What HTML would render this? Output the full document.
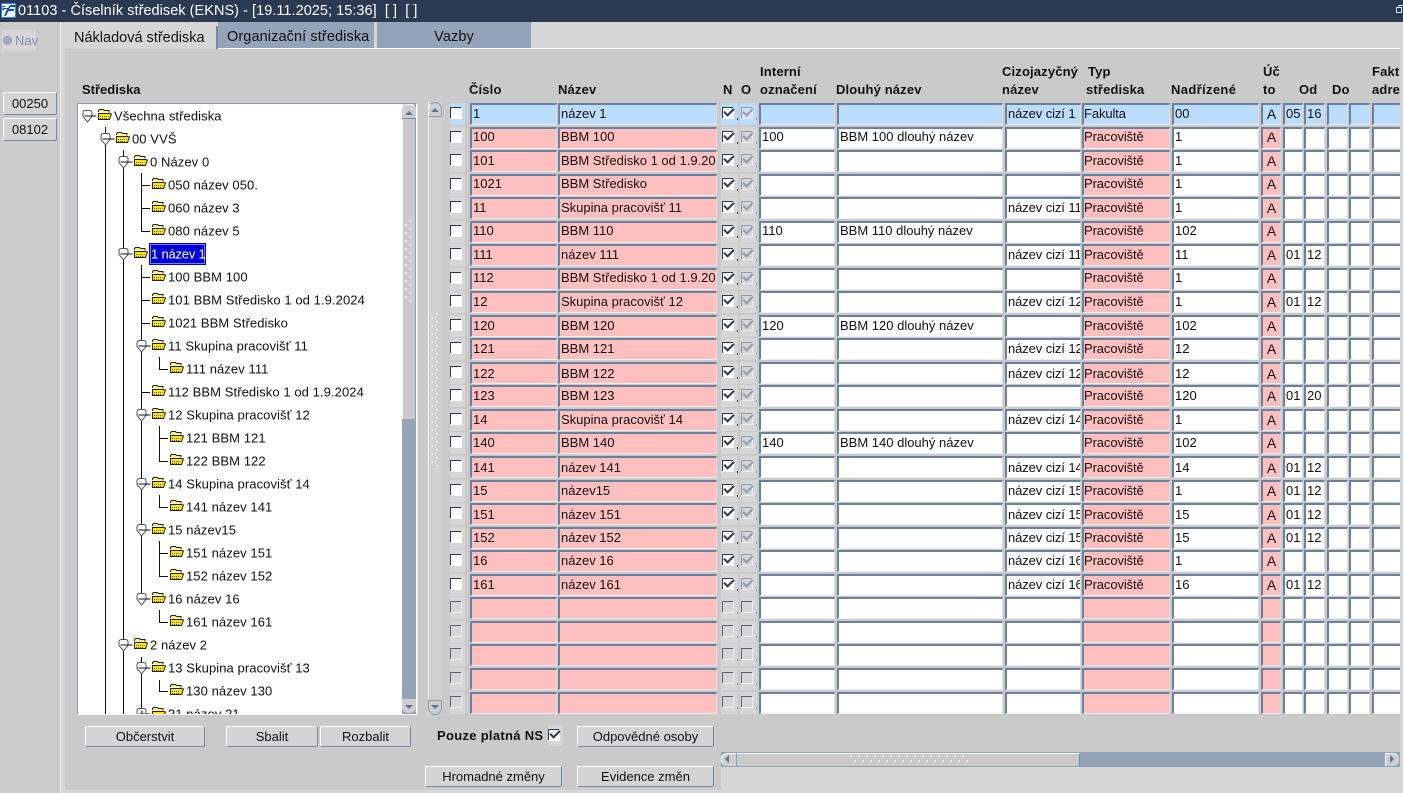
<!DOCTYPE html>
<html><head><meta charset="utf-8"><title>01103</title>
<style>
html,body{margin:0;padding:0;width:1403px;height:793px;overflow:hidden;background:#d6d6d6}
body{font-family:"Liberation Sans",Arial,sans-serif;font-size:13px;color:#111;position:relative}
.a{position:absolute}
#tb{left:0;top:0;width:1403px;height:22px;background:#2b3a52;color:#fff;font-size:14.5px;line-height:21px;white-space:pre;letter-spacing:.04px}
#side{left:0;top:22px;width:60px;height:771px;background:#cbcbcb;border-right:1px solid #eee}
#panel{left:65px;top:49px;width:1335px;height:741px;background:#cacaca}
#lo{left:721px;top:767px;width:682px;height:26px;background:#d6d6d6}
#wl{left:218px;top:48px;width:1182px;height:1px;background:#fff}
.tab{top:22px;height:26px;background:#94a3b7;line-height:31px;font-size:14.5px;letter-spacing:.1px;color:#111}
.h{position:absolute;font-weight:bold;font-size:13px;letter-spacing:.15px;white-space:nowrap;line-height:16px;color:#111}
.btn{position:absolute;box-sizing:border-box;background:#d4d4d4;border:1px solid;border-color:#fff #7489a8 #7489a8 #fff;border-radius:2px;text-align:center;font-size:13px;line-height:19px;white-space:nowrap;color:#111}
.r{position:absolute;left:0;top:0;width:1400px;height:22px}
.r i{position:absolute;top:0;height:22px;box-sizing:border-box;font-style:normal;background:#fff;border-style:solid;border-width:2px 1px 1px 2px;border-color:#6b7f9f #dcdcdc #efefef #6b7f9f;overflow:hidden;white-space:nowrap;font-size:13px;letter-spacing:0;line-height:18px;padding-left:1px}
.r.t i{line-height:16px}
.r.d i{line-height:20px}
.r i:nth-child(1){left:450px;width:15px;background:#d6d6d6;border:0;padding:0}
.r i:nth-child(2){left:470px;width:87px;background:#ffbfbf}
.r i:nth-child(3){left:558px;width:159px;background:#ffbfbf}
.r i:nth-child(4){left:721px;width:17px;background:#d6d6d6;border:0;padding:0}
.r i:nth-child(5){left:740px;width:17px;background:#d6d6d6;border:0;padding:0}
.r i:nth-child(6){left:759px;width:76px}
.r i:nth-child(7){left:837px;width:166px}
.r i:nth-child(8){left:1005px;width:76px;letter-spacing:-.1px}
.r i:nth-child(9){left:1082px;width:88px;background:#ffbfbf;padding-left:0;letter-spacing:-.1px}
.r i:nth-child(10){left:1172px;width:87px}
.r i:nth-child(11){left:1261px;width:20px;background:#ffbfbf;text-align:center;padding:0;font-size:14px}
.r i:nth-child(12){left:1283px;width:20px}
.r i:nth-child(13){left:1304px;width:21px}
.r i:nth-child(14){left:1327px;width:21px}
.r i:nth-child(15){left:1349px;width:21px}
.r i:nth-child(16){left:1372px;width:28px;border-right:0}
.r.s i{background:#bbdcfd}
.r i:nth-child(4)::after,.r i:nth-child(5)::after{content:"";position:absolute;left:16px;top:15px;width:2px;height:2px;background:#2b3a52}
.r i:nth-child(5)::after{background:#8c9bb0}
.r.e i:nth-child(4)::after,.r.e i:nth-child(5)::after{background:#8c9bb0}
u{position:absolute;left:1px;top:4px;width:10px;height:10px;background:#fff;border-top:1px solid #2b3a52;border-left:1px solid #2b3a52;box-shadow:1px 1px 0 #fff;text-decoration:none;display:block}
.r i:nth-child(1) u{left:0;top:4px}
.r i:nth-child(5) u{background:#d6d6d6;border-color:#8c9bb0;box-shadow:1px 1px 0 #eee}
.r.s i:nth-child(5) u{background:#d8e2ee}
.r.e u,.r.e i:nth-child(5) u{background:#d6d6d6;border-color:#55627a;box-shadow:1px 1px 0 #f2f2f2}
u.k::after{content:"";position:absolute;left:3px;top:-2px;width:4px;height:8px;border:solid #2b3a52;border-width:0 2px 2px 0;transform:rotate(45deg)}
.r i:nth-child(5) u.k::after{border-color:#8c9bb0}
.g{position:absolute;background-image:radial-gradient(circle at 1px 1px,#f2f2f2 .9px,transparent 1.2px),radial-gradient(circle at 1px 1px,#f2f2f2 .9px,transparent 1.2px);background-size:10px 8px;background-position:0 4px,5px 0}
svg text{font-family:"Liberation Sans",Arial,sans-serif;font-size:13px;letter-spacing:.08px;fill:#111}
</style></head><body>
<div id="side" class="a"></div>
<div id="panel" class="a"></div>
<div id="lo" class="a"></div>
<div id="tb" class="a"><span class="a" style="left:18px;top:1px">01103 - Číselník středisek (EKNS) - [19.11.2025; 15:36]  [ ]  [ ]</span></div>
<svg class="a" style="left:1px;top:3px" width="15" height="15" viewBox="0 0 15 15"><rect width="15" height="15" fill="#fff"/><rect x=".5" y=".5" width="14" height="14" fill="none" stroke="#2f7df0"/><path d="M9 2h5v2H9.500L8 6h5v2H7.500L5 13H3l3-7H2V5h5z" fill="#0a4fd0"/><path d="M1 3h3v1H1zM1 6h2v1H1z" fill="#0a4fd0"/></svg>
<svg class="a" style="left:1396px;top:5px" width="7" height="9" viewBox="0 0 7 9"><path d="M2.500.5h4.500M2.500.5v2M.5 2.500h5v5h-5z" fill="none" stroke="#dfe5ee"/></svg>

<div class="a" style="left:2px;top:30px;width:34px;height:21px;background:#d6d6d6"></div>
<div class="a" style="left:3px;top:36px;width:7px;height:7px;border-radius:50%;background:#aab;border:1px solid #8c9bb5"></div>
<div class="a" style="left:15px;top:33px;color:#8391ad;font-size:13px;line-height:16px">Nav</div>
<div class="btn" style="left:3px;top:92px;width:54px;height:23px;line-height:21px">00250</div>
<div class="btn" style="left:3px;top:118px;width:54px;height:23px;line-height:21px">08102</div>

<div class="a" style="left:61px;top:22px;width:4px;height:771px;background:#d6d6d6"></div>
<div class="a" style="left:74px;top:30px;font-size:14.5px;line-height:17px">Nákladová střediska</div>
<div class="a" style="left:216px;top:26px;width:2px;height:23px;background:#7489a8"></div>
<div class="a tab" style="left:218px;width:156px;padding-left:9px;box-sizing:border-box">Organizační střediska</div>
<div class="a" style="left:374px;top:22px;width:3px;height:26px;background:#d6d6d6"></div>
<div class="a tab" style="left:377px;width:154px;text-align:center">Vazby</div>
<div id="wl" class="a"></div>

<div class="h" style="left:82px;top:82px;letter-spacing:0">Střediska</div>
<div class="h" style="left:469px;top:82px">Číslo</div>
<div class="h" style="left:558px;top:82px">Název</div>
<div class="h" style="left:723px;top:82px">N</div>
<div class="h" style="left:741px;top:82px">O</div>
<div class="h" style="left:760px;top:64px">Interní</div>
<div class="h" style="left:760px;top:82px">označení</div>
<div class="h" style="left:836px;top:82px">Dlouhý název</div>
<div class="h" style="left:1002px;top:64px">Cizojazyčný</div>
<div class="h" style="left:1002px;top:82px">název</div>
<div class="h" style="left:1088px;top:64px">Typ</div>
<div class="h" style="left:1086px;top:82px">střediska</div>
<div class="h" style="left:1171px;top:82px;letter-spacing:.35px">Nadřízené</div>
<div class="h" style="left:1263px;top:64px">Úč</div>
<div class="h" style="left:1263px;top:82px">to</div>
<div class="h" style="left:1299px;top:82px">Od</div>
<div class="h" style="left:1332px;top:82px">Do</div>
<div class="a" style="left:1372px;top:60px;width:28px;height:40px;overflow:hidden"><div class="h" style="left:0;top:4px">Faktura</div><div class="h" style="left:0;top:22px">adresa</div></div>

<!-- tree -->
<div class="a" style="left:77px;top:103px;width:338px;height:610px;background:#fff;border:1px solid;border-color:#8a9ab0 #fff #fff #8a9ab0"></div>
<svg class="a" style="left:78px;top:104px" width="324" height="610" viewBox="78 104 324 610">
<defs>
<g id="f"><path d="M.5 3V1.500l1-1h4l1 1h4.500v2" fill="#fff27a" stroke="#222"/><path d="M.5 10.500V4.500h11l2 .5-2 5.500z" fill="#ffe800" stroke="#222"/><path d="M2 7.500h8.500M2 9.500h8" stroke="#5f5600" stroke-dasharray="1 1"/></g>
<g id="m"><path d="M-4.500-2.500Q-4.500-5-2-5h4Q4.500-5 4.500-2.500v3.500L0 6.500-4.500 1z" fill="#fff" stroke="#4a5468"/><path d="M-3 .5H9" stroke="#111"/></g>
<g id="p"><path d="M-4.500-2.500Q-4.500-5-2-5h4Q4.500-5 4.500-2.500v3.500L0 6.500-4.500 1z" fill="#fff" stroke="#4a5468"/><path d="M-3 .5H9M.5-3V3" stroke="#111"/></g>
</defs>
<path fill="none" stroke="#111" d="M105.500 127V714M123.500 150V714M141.500 173V231.500H150M141.500 185.500H150M141.500 208.500H150M141.500 265V599M141.500 277.500H150M141.500 300.500H150M141.500 323.500H150M141.500 392.500H150M141.500 657V714M159.500 357V369.500H168M159.500 426V461.500H168M159.500 438.500H168M159.500 495V507.500H168M159.500 541V576.500H168M159.500 553.500H168M159.500 610V622.500H168M159.500 680V691.500H168"/>
<use href="#m" x="87.500" y="115.500"/><use href="#f" x="98" y="109"/><text x="114" y="120.500">Všechna střediska</text>
<use href="#m" x="105.500" y="138.500"/><use href="#f" x="116" y="132"/><text x="132" y="143.500">00 VVŠ</text>
<use href="#m" x="123.500" y="161.500"/><use href="#f" x="134" y="155"/><text x="150" y="166.500">0 Název 0</text>
<use href="#f" x="152" y="178"/><text x="168" y="189.500">050 název 050.</text>
<use href="#f" x="152" y="201"/><text x="168" y="212.500">060 název 3</text>
<use href="#f" x="152" y="224"/><text x="168" y="235.500">080 název 5</text>
<use href="#m" x="123.500" y="253.500"/><use href="#f" x="134" y="247"/>
<rect x="149" y="243" width="57" height="22" fill="#0000d8"/><rect x="150.500" y="244.500" width="54" height="19" fill="none" stroke="#fff" stroke-dasharray="1 1"/>
<text x="151" y="258.500" style="fill:#fff;letter-spacing:-.2px">1 název 1</text>
<use href="#f" x="152" y="270"/><text x="168" y="281.500">100 BBM 100</text>
<use href="#f" x="152" y="293"/><text x="168" y="304.500">101 BBM Středisko 1 od 1.9.2024</text>
<use href="#f" x="152" y="316"/><text x="168" y="327.500">1021 BBM Středisko</text>
<use href="#m" x="141.500" y="345.500"/><use href="#f" x="152" y="339"/><text x="168" y="350.500">11 Skupina pracovišť 11</text>
<use href="#f" x="170" y="362"/><text x="186" y="373.500">111 název 111</text>
<use href="#f" x="152" y="385"/><text x="168" y="396.500">112 BBM Středisko 1 od 1.9.2024</text>
<use href="#m" x="141.500" y="414.500"/><use href="#f" x="152" y="408"/><text x="168" y="419.500">12 Skupina pracovišť 12</text>
<use href="#f" x="170" y="431"/><text x="186" y="442.500">121 BBM 121</text>
<use href="#f" x="170" y="454"/><text x="186" y="465.500">122 BBM 122</text>
<use href="#m" x="141.500" y="483.500"/><use href="#f" x="152" y="477"/><text x="168" y="488.500">14 Skupina pracovišť 14</text>
<use href="#f" x="170" y="500"/><text x="186" y="511.500">141 název 141</text>
<use href="#m" x="141.500" y="529.500"/><use href="#f" x="152" y="523"/><text x="168" y="534.500">15 název15</text>
<use href="#f" x="170" y="546"/><text x="186" y="557.500">151 název 151</text>
<use href="#f" x="170" y="569"/><text x="186" y="580.500">152 název 152</text>
<use href="#m" x="141.500" y="598.500"/><use href="#f" x="152" y="592"/><text x="168" y="603.500">16 název 16</text>
<use href="#f" x="170" y="615"/><text x="186" y="626.500">161 název 161</text>
<use href="#m" x="123.500" y="644.500"/><use href="#f" x="134" y="638"/><text x="150" y="649.500">2 název 2</text>
<use href="#m" x="141.500" y="667.500"/><use href="#f" x="152" y="661"/><text x="168" y="672.500">13 Skupina pracovišť 13</text>
<use href="#f" x="170" y="684"/><text x="186" y="695.500">130 název 130</text>
<use href="#p" x="141.500" y="713.500"/><use href="#f" x="152" y="707"/><text x="168" y="718.500">21 název 21</text>
</svg>

<!-- tree scrollbar -->
<div class="a" style="left:402px;top:104px;width:14px;height:610px;background:#94a3b7"></div>
<div class="a" style="left:402px;top:104px;width:12px;height:315px;background:#cacaca;border-left:1px solid #fff;border-right:1px solid #8a9ab0"></div>
<div class="a" style="left:402px;top:104px;width:14px;height:15px;background:#cfcfcf;border-radius:6px 6px 0 0;border-bottom:1px solid #7489a8;box-sizing:border-box;border-top:1px solid #fff"></div>
<div class="a" style="left:405px;top:111px;width:0;height:0;border:4px solid transparent;border-top:0;border-bottom:4px solid #5d7298"></div>
<div class="a" style="left:402px;top:699px;width:14px;height:15px;background:#cfcfcf;border-radius:0 0 6px 6px;box-sizing:border-box;border-bottom:1px solid #8a9ab0"></div>
<div class="a" style="left:405px;top:705px;width:0;height:0;border:4px solid transparent;border-bottom:0;border-top:4px solid #5d7298"></div>
<div class="g" style="left:405px;top:220px;width:8px;height:82px"></div>

<!-- grid scrollbar -->
<div class="a" style="left:417px;top:104px;width:1px;height:610px;background:#e4e4e4"></div>
<div class="a" style="left:428px;top:102px;width:13px;height:613px;background:#d0d0d0;border-left:1px solid #f0f0f0"></div>
<div class="a" style="left:428px;top:102px;width:14px;height:15px;background:#cfcfcf;border-radius:7px 7px 0 0;box-sizing:border-box;border:1px solid;border-color:#8a9ab0 #8a9ab0 #8a9ab0 #fff"></div>
<div class="a" style="left:431px;top:108px;width:0;height:0;border:4px solid transparent;border-top:0;border-bottom:4px solid #5d7298"></div>
<div class="a" style="left:428px;top:700px;width:14px;height:15px;background:#cfcfcf;border-radius:0 0 7px 7px;box-sizing:border-box;border:1px solid;border-color:#8a9ab0"></div>
<div class="a" style="left:431px;top:705px;width:0;height:0;border:4px solid transparent;border-bottom:0;border-top:4px solid #5d7298"></div>
<div class="g" style="left:431px;top:313px;width:8px;height:155px"></div>

<!-- rows -->
<div class="r s" style="top:103px"><i><u></u></i><i>1</i><i>název 1</i><i><u class="k"></u></i><i><u class="k"></u></i><i></i><i></i><i>název cizí 1</i><i>Fakulta</i><i>00</i><i>A</i><i>05</i><i>16</i><i></i><i></i><i></i></div>
<div class="r t" style="top:127px"><i><u></u></i><i>100</i><i>BBM 100</i><i><u class="k"></u></i><i><u class="k"></u></i><i>100</i><i>BBM 100 dlouhý název</i><i></i><i>Pracoviště</i><i>1</i><i>A</i><i></i><i></i><i></i><i></i><i></i></div>
<div class="r" style="top:150px"><i><u></u></i><i>101</i><i>BBM Středisko 1 od 1.9.2024</i><i><u class="k"></u></i><i><u class="k"></u></i><i></i><i></i><i></i><i>Pracoviště</i><i>1</i><i>A</i><i></i><i></i><i></i><i></i><i></i></div>
<div class="r t" style="top:174px"><i><u></u></i><i>1021</i><i>BBM Středisko</i><i><u class="k"></u></i><i><u class="k"></u></i><i></i><i></i><i></i><i>Pracoviště</i><i>1</i><i>A</i><i></i><i></i><i></i><i></i><i></i></div>
<div class="r" style="top:197px"><i><u></u></i><i>11</i><i>Skupina pracovišť 11</i><i><u class="k"></u></i><i><u class="k"></u></i><i></i><i></i><i>název cizí 11</i><i>Pracoviště</i><i>1</i><i>A</i><i></i><i></i><i></i><i></i><i></i></div>
<div class="r t" style="top:221px"><i><u></u></i><i>110</i><i>BBM 110</i><i><u class="k"></u></i><i><u class="k"></u></i><i>110</i><i>BBM 110 dlouhý název</i><i></i><i>Pracoviště</i><i>102</i><i>A</i><i></i><i></i><i></i><i></i><i></i></div>
<div class="r" style="top:244px"><i><u></u></i><i>111</i><i>název 111</i><i><u class="k"></u></i><i><u class="k"></u></i><i></i><i></i><i>název cizí 111</i><i>Pracoviště</i><i>11</i><i>A</i><i>01</i><i>12</i><i></i><i></i><i></i></div>
<div class="r t" style="top:268px"><i><u></u></i><i>112</i><i>BBM Středisko 1 od 1.9.2024</i><i><u class="k"></u></i><i><u class="k"></u></i><i></i><i></i><i></i><i>Pracoviště</i><i>1</i><i>A</i><i></i><i></i><i></i><i></i><i></i></div>
<div class="r" style="top:291px"><i><u></u></i><i>12</i><i>Skupina pracovišť 12</i><i><u class="k"></u></i><i><u class="k"></u></i><i></i><i></i><i>název cizí 12</i><i>Pracoviště</i><i>1</i><i>A</i><i>01</i><i>12</i><i></i><i></i><i></i></div>
<div class="r" style="top:315px"><i><u></u></i><i>120</i><i>BBM 120</i><i><u class="k"></u></i><i><u class="k"></u></i><i>120</i><i>BBM 120 dlouhý název</i><i></i><i>Pracoviště</i><i>102</i><i>A</i><i></i><i></i><i></i><i></i><i></i></div>
<div class="r" style="top:338px"><i><u></u></i><i>121</i><i>BBM 121</i><i><u class="k"></u></i><i><u class="k"></u></i><i></i><i></i><i>název cizí 121</i><i>Pracoviště</i><i>12</i><i>A</i><i></i><i></i><i></i><i></i><i></i></div>
<div class="r d" style="top:362px"><i><u></u></i><i>122</i><i>BBM 122</i><i><u class="k"></u></i><i><u class="k"></u></i><i></i><i></i><i>název cizí 122</i><i>Pracoviště</i><i>12</i><i>A</i><i></i><i></i><i></i><i></i><i></i></div>
<div class="r" style="top:385px"><i><u></u></i><i>123</i><i>BBM 123</i><i><u class="k"></u></i><i><u class="k"></u></i><i></i><i></i><i></i><i>Pracoviště</i><i>120</i><i>A</i><i>01</i><i>20</i><i></i><i></i><i></i></div>
<div class="r" style="top:409px"><i><u></u></i><i>14</i><i>Skupina pracovišť 14</i><i><u class="k"></u></i><i><u class="k"></u></i><i></i><i></i><i>název cizí 14</i><i>Pracoviště</i><i>1</i><i>A</i><i></i><i></i><i></i><i></i><i></i></div>
<div class="r" style="top:432px"><i><u></u></i><i>140</i><i>BBM 140</i><i><u class="k"></u></i><i><u class="k"></u></i><i>140</i><i>BBM 140 dlouhý název</i><i></i><i>Pracoviště</i><i>102</i><i>A</i><i></i><i></i><i></i><i></i><i></i></div>
<div class="r d" style="top:456px"><i><u></u></i><i>141</i><i>název 141</i><i><u class="k"></u></i><i><u class="k"></u></i><i></i><i></i><i>název cizí 141</i><i>Pracoviště</i><i>14</i><i>A</i><i>01</i><i>12</i><i></i><i></i><i></i></div>
<div class="r" style="top:480px"><i><u></u></i><i>15</i><i>název15</i><i><u class="k"></u></i><i><u class="k"></u></i><i></i><i></i><i>název cizí 15</i><i>Pracoviště</i><i>1</i><i>A</i><i>01</i><i>12</i><i></i><i></i><i></i></div>
<div class="r d" style="top:503px"><i><u></u></i><i>151</i><i>název 151</i><i><u class="k"></u></i><i><u class="k"></u></i><i></i><i></i><i>název cizí 151</i><i>Pracoviště</i><i>15</i><i>A</i><i>01</i><i>12</i><i></i><i></i><i></i></div>
<div class="r" style="top:527px"><i><u></u></i><i>152</i><i>název 152</i><i><u class="k"></u></i><i><u class="k"></u></i><i></i><i></i><i>název cizí 152</i><i>Pracoviště</i><i>15</i><i>A</i><i>01</i><i>12</i><i></i><i></i><i></i></div>
<div class="r" style="top:550px"><i><u></u></i><i>16</i><i>název 16</i><i><u class="k"></u></i><i><u class="k"></u></i><i></i><i></i><i>název cizí 16</i><i>Pracoviště</i><i>1</i><i>A</i><i></i><i></i><i></i><i></i><i></i></div>
<div class="r" style="top:574px"><i><u></u></i><i>161</i><i>název 161</i><i><u class="k"></u></i><i><u class="k"></u></i><i></i><i></i><i>název cizí 161</i><i>Pracoviště</i><i>16</i><i>A</i><i>01</i><i>12</i><i></i><i></i><i></i></div>
<div class="r e" style="top:597px"><i><u></u></i><i></i><i></i><i><u></u></i><i><u></u></i><i></i><i></i><i></i><i></i><i></i><i></i><i></i><i></i><i></i><i></i><i></i></div>
<div class="r e" style="top:621px"><i><u></u></i><i></i><i></i><i><u></u></i><i><u></u></i><i></i><i></i><i></i><i></i><i></i><i></i><i></i><i></i><i></i><i></i><i></i></div>
<div class="r e" style="top:644px"><i><u></u></i><i></i><i></i><i><u></u></i><i><u></u></i><i></i><i></i><i></i><i></i><i></i><i></i><i></i><i></i><i></i><i></i><i></i></div>
<div class="r e" style="top:668px"><i><u></u></i><i></i><i></i><i><u></u></i><i><u></u></i><i></i><i></i><i></i><i></i><i></i><i></i><i></i><i></i><i></i><i></i><i></i></div>
<div class="r e" style="top:692px"><i><u></u></i><i></i><i></i><i><u></u></i><i><u></u></i><i></i><i></i><i></i><i></i><i></i><i></i><i></i><i></i><i></i><i></i><i></i></div>

<!-- buttons -->
<div class="btn" style="left:85px;top:726px;width:120px;height:21px">Občerstvit</div>
<div class="btn" style="left:226px;top:726px;width:92px;height:21px">Sbalit</div>
<div class="btn" style="left:320px;top:726px;width:91px;height:21px">Rozbalit</div>
<div class="h" style="left:437px;top:728px;letter-spacing:.3px">Pouze platná NS</div>
<div class="a" style="left:548px;top:725px;width:15px;height:21px;background:#d6d6d6"></div>
<u class="k" style="left:548px;top:729px"></u>
<div class="btn" style="left:577px;top:726px;width:137px;height:21px">Odpovědné osoby</div>
<div class="btn" style="left:425px;top:766px;width:137px;height:21px">Hromadné změny</div>
<div class="btn" style="left:577px;top:766px;width:137px;height:21px">Evidence změn</div>

<!-- h scrollbar -->
<div class="a" style="left:721px;top:752px;width:679px;height:15px;background:#94a3b7"></div>
<div class="a" style="left:721px;top:753px;width:15px;height:13px;background:#cfcfcf;border-radius:6px 0 0 6px;box-sizing:border-box;border-top:1px solid #fff;border-left:1px solid #fff"></div>
<div class="a" style="left:725px;top:755px;width:0;height:0;border:4px solid transparent;border-left:0;border-right:4px solid #5d7298"></div>
<div class="a" style="left:737px;top:753px;width:343px;height:13px;background:#cacaca;border-top:1px solid #fff;border-right:1px solid #7489a8;box-sizing:border-box"></div>
<div class="g" style="left:850px;top:755px;width:118px;height:9px;background-size:8px 10px;background-position:0 0,4px 5px"></div>
<div class="a" style="left:1385px;top:753px;width:14px;height:13px;background:#cfcfcf;border-radius:0 6px 6px 0;box-sizing:border-box;border-top:1px solid #fff;border-left:1px solid #fff"></div>
<div class="a" style="left:1390px;top:755px;width:0;height:0;border:4px solid transparent;border-right:0;border-left:4px solid #5d7298"></div>
</body></html>
